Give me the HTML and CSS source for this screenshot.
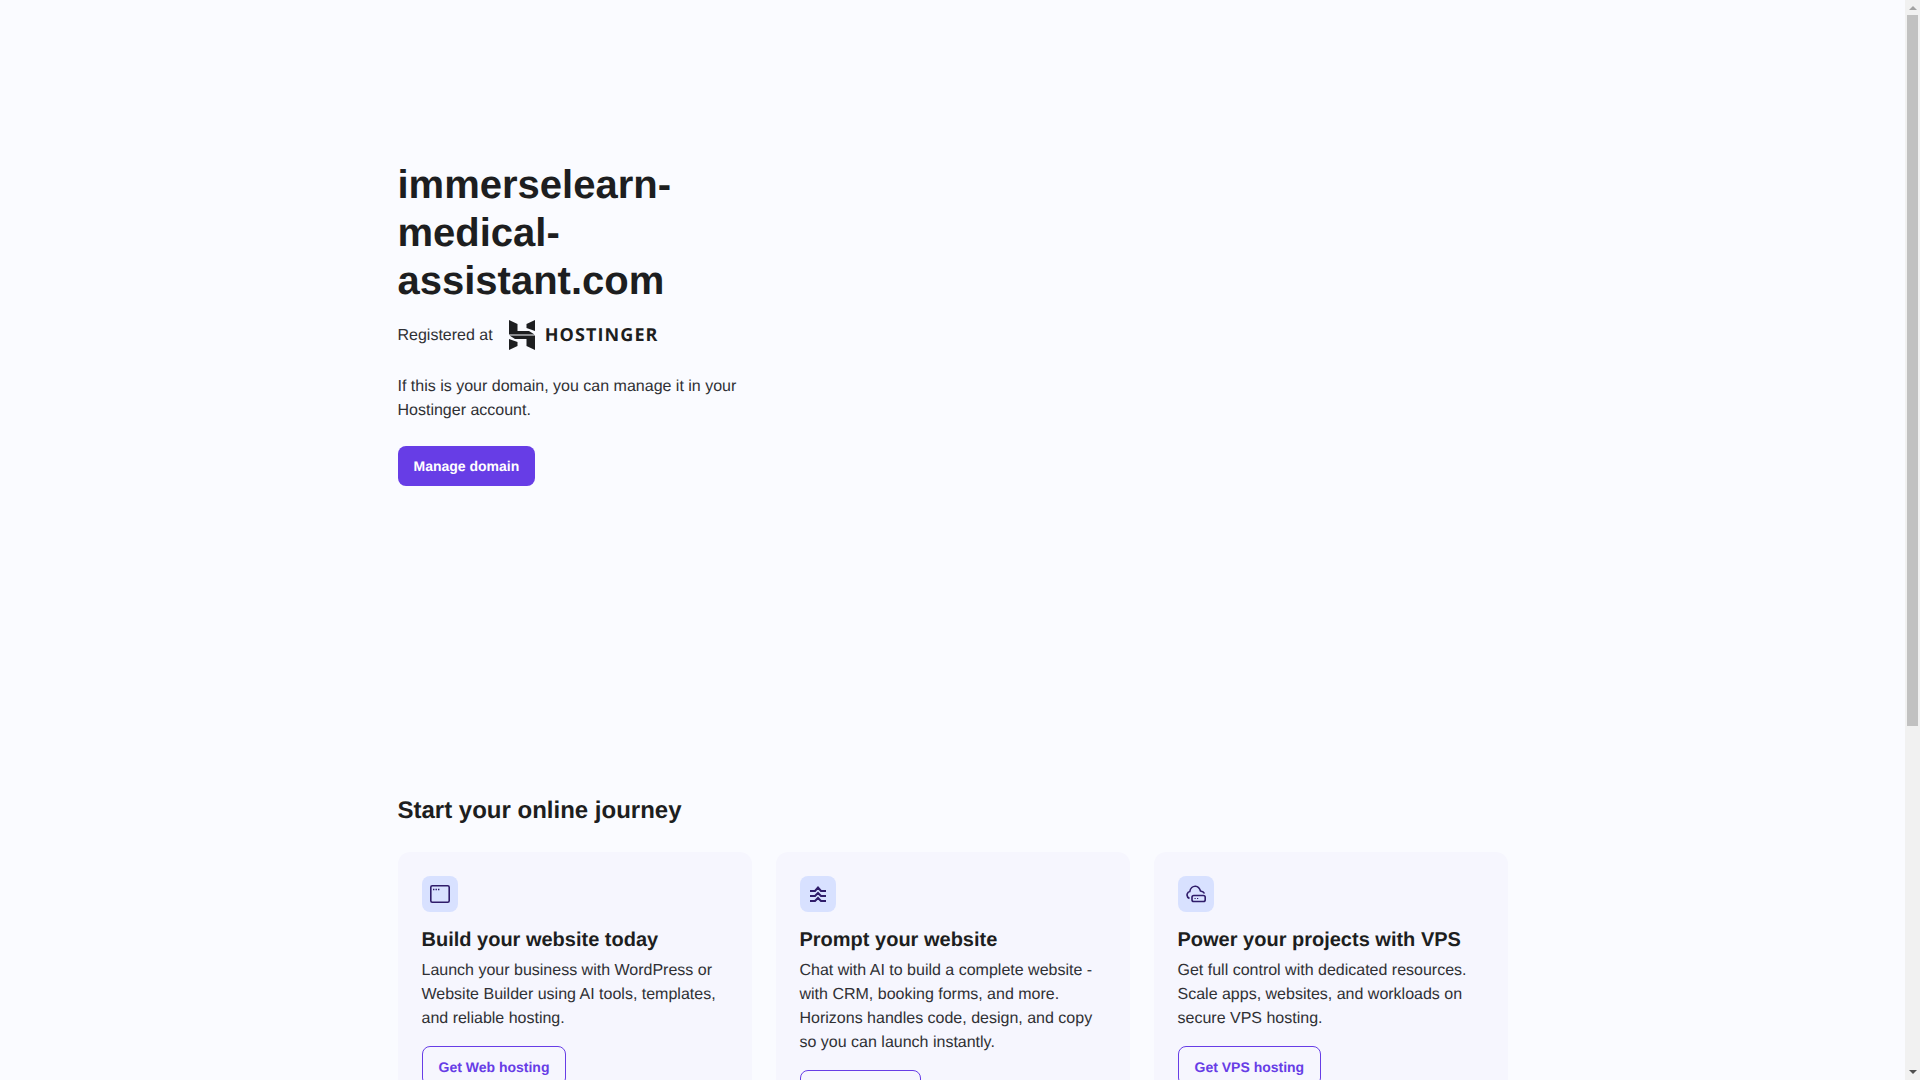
FILE: index.html
```html
<!DOCTYPE html>
<html lang="en">
<head>
  <meta charset="UTF-8">
  <meta name="viewport" content="width=device-width, initial-scale=1.0">
  <title>immerselearn-medical-assistant.com</title>
  <link rel="stylesheet" href="styles.css">
</head>
<body>
  <div class="container">
    <section class="hero">
      <h1>immerselearn-medical-assistant.com</h1>
      <div class="registered">
        <span class="registered-label">Registered at</span>
        <div class="logo">
          <svg width="26" height="30" viewBox="0 0 26 30" fill="#1d1e20">
            <polygon points="0,0 8.500,4 8.500,11 20,11 25.500,14.500 0,14.500"/>
            <polygon points="17.500,4 26,0 26,11 17.500,8"/>
            <polygon points="26,30 17.500,26 17.500,19 6,19 0.500,15.500 26,15.500"/>
            <polygon points="8.500,26 0,30 0,19 8.500,22"/>
          </svg>
          <span class="logo-name">HOSTINGER</span>
        </div>
      </div>
      <p>If this is your domain, you can manage it in your Hostinger account.</p>
      <a class="btn btn-primary" href="#">Manage domain</a>
    </section>

    <section class="journey">
      <h2>Start your online journey</h2>
      <div class="cards">
        <div class="card">
          <div class="card-icon">
            <svg width="20" height="20" viewBox="0 0 20 20" fill="none" stroke="#2f1c6a" stroke-width="1.600">
              <rect x="0.800" y="1.800" width="18.400" height="16.400" rx="1.500"/>
              <path d="M3 5.500h1.400M5.500 5.500h1.400M8 5.500h1.400"/>
            </svg>
          </div>
          <h3>Build your website today</h3>
          <p>Launch your business with WordPress or Website Builder using AI tools, templates, and reliable hosting.</p>
          <a class="btn btn-outline" href="#">Get Web hosting</a>
        </div>
        <div class="card">
          <div class="card-icon">
            <svg width="20" height="20" viewBox="0 0 20 20" fill="none" stroke="#2f1c6a" stroke-width="2">
              <path d="M2 7H7L10 3.500L13 7H18"/>
              <path d="M2 12H7L10 9L13 12H18"/>
              <path d="M2 17H7L10 14L13 17H18"/>
            </svg>
          </div>
          <h3>Prompt your website</h3>
          <p>Chat with AI to build a complete website - with CRM, booking forms, and more. Horizons handles code, design, and copy so you can launch instantly.</p>
          <a class="btn btn-outline" href="#">Get Horizons</a>
        </div>
        <div class="card">
          <div class="card-icon">
            <svg width="20" height="20" viewBox="0 0 20 20" fill="none" stroke="#2f1c6a" stroke-width="1.600">
              <path d="M3.500 14.500C1.500 13.500 0.700 11.800 1.200 10C1.600 8.600 2.600 7.700 3.800 7.500C4.300 4.300 6.800 2 9.500 2.200C12 2.400 13.800 4.600 14.500 7C16 7.200 17.800 8 18.500 9.500"/>
              <rect x="6" y="11.500" width="13.200" height="6" rx="1.800"/>
              <path d="M8.500 14.500h1.200M11 14.500h1.200" stroke-width="1.200"/>
            </svg>
          </div>
          <h3>Power your projects with VPS</h3>
          <p>Get full control with dedicated resources. Scale apps, websites, and workloads on secure VPS hosting.</p>
          <a class="btn btn-outline" href="#">Get VPS hosting</a>
        </div>
      </div>
    </section>
  </div>

  <div class="scrollbar">
    <span class="arrow-up"></span>
    <div class="scroll-track">
      <div class="scroll-thumb"></div>
    </div>
    <span class="arrow-down"></span>
  </div>
</body>
</html>
```

FILE: styles.css
```css
body {
  margin: 0;
  padding-right: 15px;
  background-color: #fafbff;
  color: #1d1e20;
  font-family: "Liberation Sans", Arial, sans-serif;
  font-size: 16px;
  line-height: 24px;
  text-rendering: geometricPrecision;
}
p {
  color: #2f3034;
}
.container {
  width: 1110px;
  min-height: 1595px;
  margin: 0 auto;
}
.hero {
  width: 354px;
  padding-top: 161px;
}
h1 {
  margin: 0;
  font-size: 40px;
  line-height: 48px;
  font-weight: 700;
}
.registered {
  display: flex;
  align-items: center;
  gap: 16px;
  height: 30px;
  margin-top: 15px;
}
.registered-label {
  padding-top: 2px;
  color: #2f3034;
}
.logo {
  display: flex;
  align-items: center;
  gap: 10px;
}
.logo svg {
  display: block;
}
.logo-name {
  font-family: "Open Sans", sans-serif;
  font-size: 18px;
  font-weight: 700;
  letter-spacing: 1.100px;
  line-height: 30px;
}
.hero p {
  margin: 25px 0 23px;
}
.btn {
  display: inline-block;
  box-sizing: border-box;
  height: 40px;
  padding: 1px 16px 0;
  border-radius: 8px;
  font-size: 14px;
  font-weight: 700;
  line-height: 39px;
  text-decoration: none;
}
.btn-primary {
  background-color: #673de6;
  color: #fff;
}
.btn-outline {
  border: 1px solid #673de6;
  color: #673de6;
  line-height: 38px;
}
.journey {
  margin-top: 309px;
}
h2 {
  margin: 0 0 25px;
  font-size: 24px;
  line-height: 32px;
  font-weight: 700;
}
.cards {
  display: grid;
  grid-template-columns: repeat(3, 1fr);
  gap: 24px;
  align-items: start;
}
.card {
  padding: 24px;
  border-radius: 12px;
  background-color: #f6f6fe;
}
.card-icon {
  display: flex;
  align-items: center;
  justify-content: center;
  width: 36px;
  height: 36px;
  border-radius: 8px;
  background-color: #d8e1ff;
}
h3 {
  margin: 14px 0 5px;
  font-size: 20px;
  line-height: 28px;
  font-weight: 700;
}
.card p {
  margin: 0 0 15px;
}

/* the window's own scrollbar, the screenshot doesn't paint a real one */
.scrollbar {
  position: fixed;
  top: 0;
  right: 0;
  bottom: 0;
  width: 15px;
  display: flex;
  flex-direction: column;
  align-items: center;
  background-color: #f1f1f1;
}
.arrow-up,
.arrow-down {
  flex: none;
  width: 0;
  height: 0;
  border-left: 4px solid transparent;
  border-right: 4px solid transparent;
}
.arrow-up {
  margin: 6px 0 5px;
  border-bottom: 4px solid #a3a3a3;
}
.arrow-down {
  margin: 5px 0 6px;
  border-top: 4px solid #505050;
}
.scroll-track {
  flex: 1;
  width: 11px;
}
.scroll-thumb {
  height: 711px;
  background-color: #c1c1c1;
}
```
